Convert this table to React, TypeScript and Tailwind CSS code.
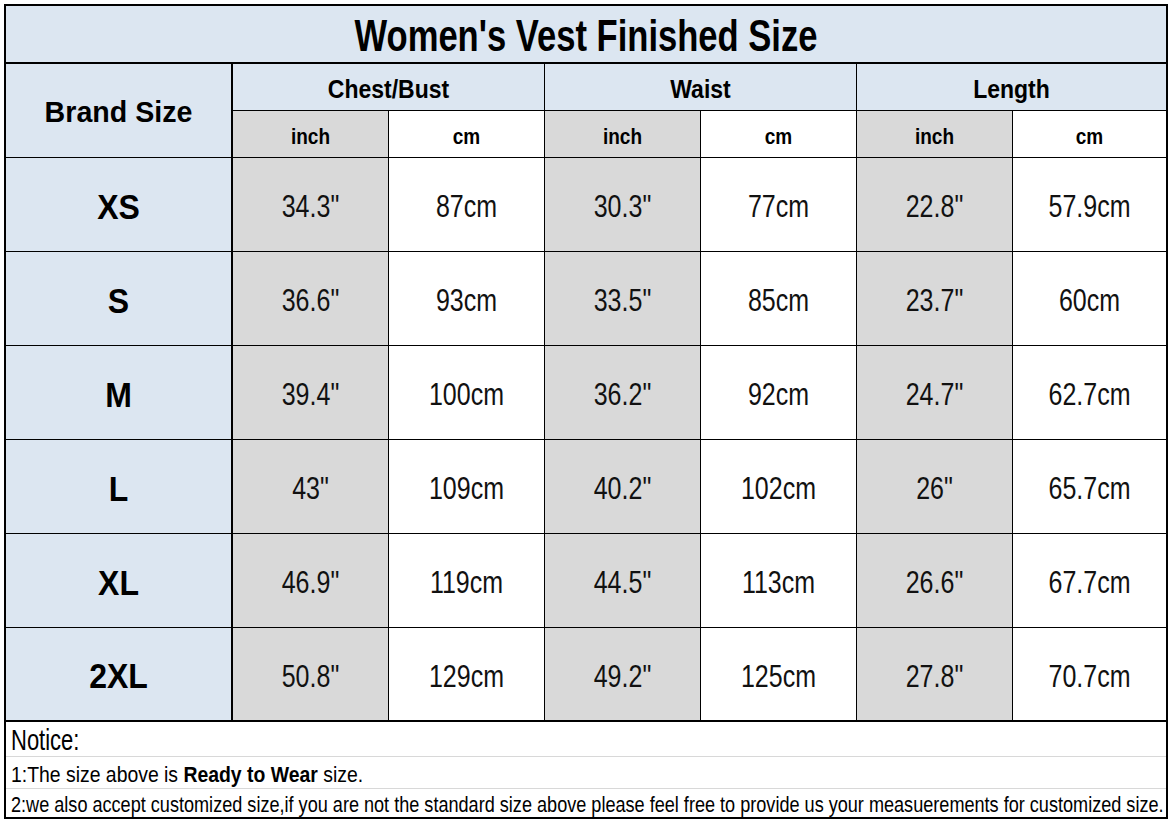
import React from "react";

const rows = [
  ["XS", '34.3"', "87cm", '30.3"', "77cm", '22.8"', "57.9cm"],
  ["S", '36.6"', "93cm", '33.5"', "85cm", '23.7"', "60cm"],
  ["M", '39.4"', "100cm", '36.2"', "92cm", '24.7"', "62.7cm"],
  ["L", '43"', "109cm", '40.2"', "102cm", '26"', "65.7cm"],
  ["XL", '46.9"', "119cm", '44.5"', "113cm", '26.6"', "67.7cm"],
  ["2XL", '50.8"', "129cm", '49.2"', "125cm", '27.8"', "70.7cm"],
];

const font = { fontFamily: '"Liberation Sans", Arial, sans-serif' };

export default function App() {
  return (
    <div className="w-[1175px] h-[822px] bg-white pt-[4px] pl-[4px]" style={font}>
      <div className="w-[1164px] border-2 border-black text-black">
        <div className="grid grid-cols-[227px_156px_156px_156px_156px_156px_153px] grid-rows-[58px_47px_47px_94px_94px_94px_94px_94px_94px]">
          {/* Title */}
          <div className="col-span-7 bg-[#dce6f1] border-b-2 border-black flex items-center justify-center">
            <span className="inline-block text-[34.6px] font-bold leading-none scale-y-[1.3] translate-y-[1px]">
              Women's Vest Finished Size
            </span>
          </div>
          {/* Header row 1 */}
          <div className="row-span-2 bg-[#dce6f1] border-r-2 border-b border-black flex items-center justify-center">
            <span className="inline-block text-[28.6px] font-bold leading-none translate-y-[2px]">Brand Size</span>
          </div>
          {["Chest/Bust", "Waist", "Length"].map((h, i) => (
            <div
              key={h}
              className={`col-span-2 bg-[#dce6f1] border-b border-black flex items-center justify-center ${i < 2 ? "border-r" : ""}`}
            >
              <span className="inline-block text-[23px] font-bold leading-none scale-y-[1.1] translate-y-[2px]">{h}</span>
            </div>
          ))}
          {/* Header row 2 */}
          {[0, 1, 2, 3, 4, 5].map((i) => (
            <div
              key={i}
              className={`border-b border-black flex items-center justify-center ${i % 2 === 0 ? "bg-[#d9d9d9]" : "bg-white"} ${i < 5 ? "border-r" : ""}`}
            >
              <span className="inline-block text-[19px] font-bold leading-none scale-y-[1.15] translate-y-[2px]">
                {i % 2 === 0 ? "inch" : "cm"}
              </span>
            </div>
          ))}
          {/* Data rows */}
          {rows.map((r, ri) =>
            r.map((v, ci) => {
              const last = ri === rows.length - 1;
              const bg = ci === 0 ? "bg-[#dce6f1]" : ci % 2 === 1 ? "bg-[#d9d9d9]" : "bg-white";
              const bb = last ? "border-b-2" : "border-b";
              const br = ci === 0 ? "border-r-2" : ci < 6 ? "border-r" : "";
              return (
                <div key={ri + "-" + ci} className={`${bg} ${bb} ${br} border-black flex items-center justify-center`}>
                  {ci === 0 ? (
                    <span className="inline-block text-[32px] font-bold leading-none scale-y-[1.1] translate-y-[2px]">{v}</span>
                  ) : (
                    <span className="inline-block text-[25px] leading-none scale-y-[1.23] translate-y-[2px] text-[#111]">{v}</span>
                  )}
                </div>
              );
            })
          )}
        </div>
        {/* Notice */}
        <div className="flex flex-col">
          <div className="h-[35px] border-b border-[#d8d8d8] flex items-center pl-[5px]">
            <span className="inline-block text-[22px] leading-none scale-y-[1.3] origin-left translate-y-[2px]">Notice:</span>
          </div>
          <div className="h-[32px] border-b border-[#d8d8d8] flex items-center pl-[5px]">
            <span className="inline-block text-[19.4px] leading-none scale-y-[1.15] origin-left whitespace-nowrap translate-y-[2px]">
              1:The size above is <b>Ready to Wear</b> size.
            </span>
          </div>
          <div className="h-[28px] flex items-center pl-[5px]">
            <span className="inline-block text-[18.1px] leading-none scale-y-[1.2] origin-left whitespace-nowrap translate-y-[2px]">
              2:we also accept customized size,if you are not the standard size above please feel free to provide us your measuerements for customized size.
            </span>
          </div>
        </div>
      </div>
    </div>
  );
}
